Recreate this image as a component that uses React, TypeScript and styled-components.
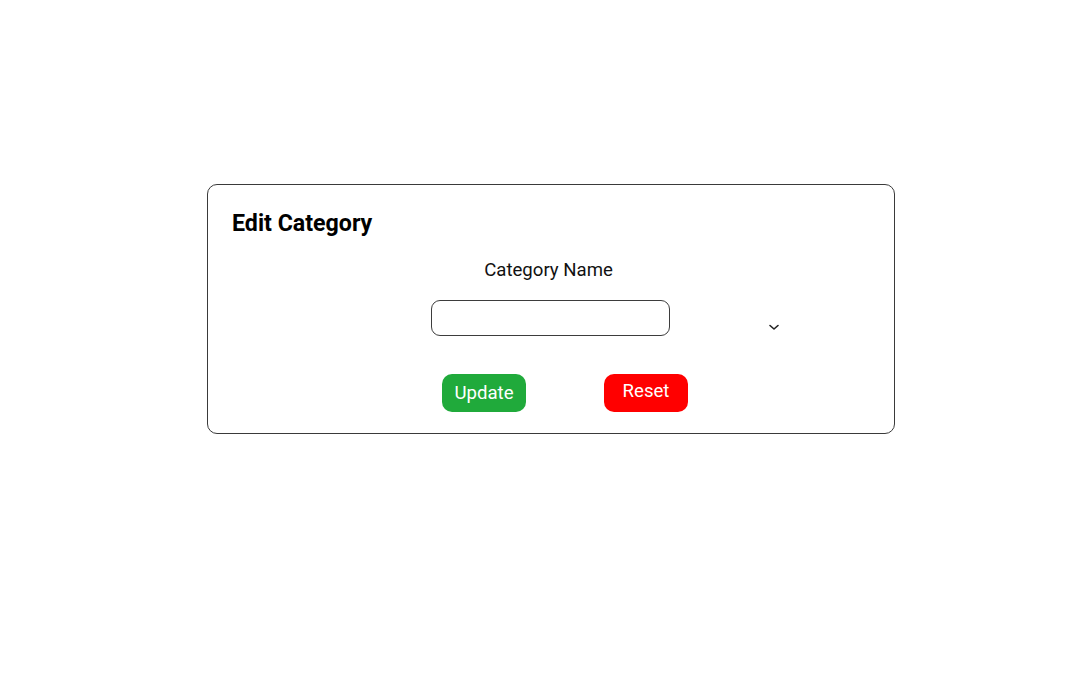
import React from "react";
import styled, { createGlobalStyle } from "styled-components";

const Global = createGlobalStyle`
  html, body { margin: 0; padding: 0; background: #ffffff; }
  body { font-family: Roboto, "Liberation Sans", sans-serif; }
  * { box-sizing: border-box; }
`;

const Page = styled.div`
  width: 1073px;
  height: 675px;
  padding: 184px 0 0 207px;
`;

const Card = styled.section`
  width: 688px;
  height: 250px;
  border: 1px solid #3a3a3a;
  border-radius: 10px;
  padding: 24px 24px 0 24px;
  display: flex;
  flex-direction: column;
`;

const Title = styled.h2`
  margin: 0;
  font-size: 23.2px;
  line-height: 28px;
  font-weight: 700;
  color: #000;
`;

const Form = styled.div`
  margin-left: 199px;
  margin-top: 22px;
  display: flex;
  flex-direction: column;
`;

const Label = styled.label`
  width: 235px;
  text-align: center;
  font-size: 18.6px;
  line-height: 22px;
  color: #111;
`;

const FieldRow = styled.div`
  margin-top: 19px;
  display: flex;
  align-items: center;
`;

const Input = styled.input`
  width: 239px;
  height: 36px;
  border: 1px solid #3d3d3d;
  border-radius: 9px;
  outline: none;
  padding: 0 10px;
  font-family: inherit;
  font-size: 16px;
`;

const Chevron = styled.svg`
  margin-left: 98px;
  margin-top: 18px;
  width: 12px;
  height: 8px;
`;

const ButtonRow = styled.div`
  margin-top: 38px;
  margin-left: 11px;
  display: flex;
  gap: 78px;
`;

const Button = styled.button<{ $bg: string; $lift: number; $h: number }>`
  width: 84px;
  height: ${(p) => p.$h}px;
  border: none;
  border-radius: 10px;
  background: ${(p) => p.$bg};
  color: #ffffff;
  font-family: inherit;
  font-size: 18.6px;
  line-height: 22px;
  padding: 0 0 ${(p) => p.$lift}px 0;
  display: flex;
  align-items: center;
  justify-content: center;
  cursor: pointer;
`;

export default function App() {
  return (
    <>
      <Global />
      <Page>
        <Card>
          <Title>Edit Category</Title>
          <Form>
            <Label htmlFor="cat">Category Name</Label>
            <FieldRow>
              <Input id="cat" />
              <Chevron viewBox="0 0 12 8" fill="none">
                <path d="M2 2.5 L6 6 L10 2.5" stroke="#222" strokeWidth="1.6" strokeLinecap="round" strokeLinejoin="round" />
              </Chevron>
            </FieldRow>
            <ButtonRow>
              <Button $bg="#20aa3b" $lift={0} $h={38}>Update</Button>
              <Button $bg="#ff0000" $lift={4} $h={38}>Reset</Button>
            </ButtonRow>
          </Form>
        </Card>
      </Page>
    </>
  );
}
